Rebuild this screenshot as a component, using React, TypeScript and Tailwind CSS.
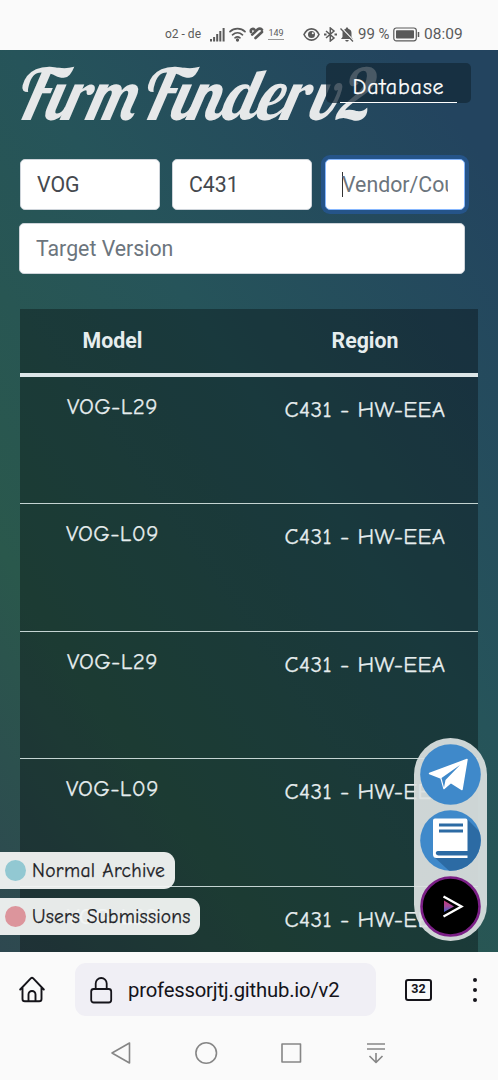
import React from 'react';
import { clsx } from 'clsx';

interface FirmwareRow {
  id: number;
  model: string;
  region: string;
}

const ROWS: FirmwareRow[] = [
  { id: 1, model: 'VOG-L29', region: 'C431 - HW-EEA' },
  { id: 2, model: 'VOG-L09', region: 'C431 - HW-EEA' },
  { id: 3, model: 'VOG-L29', region: 'C431 - HW-EEA' },
  { id: 4, model: 'VOG-L09', region: 'C431 - HW-EEA' },
  { id: 5, model: 'VOG-L29', region: 'C431 - HW-EEA' },
];

const COMIC = "font-['Comic_Neue','Comic_Sans_MS','Open_Sans',sans-serif] [-webkit-text-stroke:0.25px_currentColor]";

const StatusBar: React.FC = () => (
  <header className="flex h-[50px] items-center whitespace-nowrap bg-[#fafafa] pl-[165px] pt-[18px] text-[#5a5a5a]">
    <span className="w-[45px] text-[12px]">o2 - de</span>
    <svg className="h-[15px] w-[15px]" viewBox="0 0 15 15" fill="currentColor">
      <rect x="0" y="12" width="2" height="2.5" />
      <rect x="3.1" y="10" width="2" height="4.5" />
      <rect x="6.2" y="7" width="2" height="7.5" />
      <rect x="9.3" y="4" width="2" height="10.5" />
      <rect x="12.6" y="1" width="2" height="13.5" />
    </svg>
    <svg
      className="ml-1 h-[15px] w-[17px]"
      viewBox="0 0 17 15"
      fill="none"
      stroke="currentColor"
      strokeWidth="1.7"
      strokeLinecap="round"
    >
      <path d="M1 4.6C5 .6 12 .6 16 4.6" />
      <path d="M3.5 7.8c3-2.7 7-2.7 10 0" />
      <path d="M6 10.8c1.5-1.2 3.5-1.2 5 0" />
      <circle cx="8.5" cy="13" r=".8" fill="currentColor" />
    </svg>
    <svg
      className="ml-[3px] h-[14px] w-[15px]"
      viewBox="0 0 15 14"
      fill="none"
      stroke="currentColor"
      strokeWidth="2.6"
      strokeLinecap="round"
    >
      <path d="M2 5C1 2 4 1.2 5.5 2.7" />
      <path d="M3.2 7.6 8.5 2.5C10 1.2 12 1.3 13 2.7" />
      <path d="M6.5 11 13 5" />
    </svg>
    <span className="ml-1 w-[16px] border-b border-[#999] text-center text-[9px] leading-[11px]">149</span>
    <svg
      className="ml-[19px] h-[15px] w-[17px]"
      viewBox="0 0 17 15"
      fill="none"
      stroke="currentColor"
      strokeWidth="1.6"
    >
      <path d="M1 7.5C4.5 0 12.5 0 16 7.5 12.5 15 4.5 15 1 7.5Z" />
      <circle cx="8.5" cy="7.5" r="3.5" fill="currentColor" stroke="none" />
      <circle cx="9.8" cy="6.2" r="1" fill="#fafafa" stroke="none" />
    </svg>
    <svg
      className="ml-1 h-[15px] w-[13px]"
      viewBox="0 0 13 15"
      fill="none"
      stroke="currentColor"
      strokeWidth="1.5"
    >
      <path d="M2 4l8 7-3.7 3V1L10 4l-8 7" />
      <path d="M0 7.5h2.5M10.5 7.5H13" strokeWidth="2" />
    </svg>
    <svg className="ml-[3px] h-[15px] w-[14px]" viewBox="0 0 14 15">
      <path
        d="M7 .5c-.8 0-1.2.5-1.2 1.2C3.5 2.3 2.5 4 2.5 6v4L1 12h12l-1.5-2V6c0-2-1-3.7-3.3-4.3C8.2 1 7.8.5 7 .5ZM5.3 13h3.4c0 2-3.4 2-3.4 0Z"
        fill="currentColor"
      />
      <path d="m1.5 1 12 12.5" stroke="#fafafa" strokeWidth="1.5" />
      <path d="m.5 1.5 12.5 13" stroke="currentColor" strokeWidth="1.3" />
    </svg>
    <span className="ml-1 w-[35px] text-[15px]">99 %</span>
    <svg className="h-[15px] w-[27px]" viewBox="0 0 27 15" fill="none" stroke="currentColor">
      <rect x=".8" y="1" width="22.5" height="12.8" rx="2.5" strokeWidth="1.2" />
      <rect x="3" y="3.2" width="18" height="8.4" rx=".8" fill="currentColor" stroke="none" />
      <path d="M25.5 5v5" strokeWidth="1.5" />
    </svg>
    <span className="ml-1 pt-px text-[15.5px]">08:09</span>
  </header>
);

interface FieldProps {
  value?: string;
  placeholder?: string;
  focused?: boolean;
  className?: string;
}

const Field: React.FC<FieldProps> = ({ value, placeholder, focused = false, className }) => (
  <div
    className={clsx(
      'flex h-[51px] items-center rounded-[5px] border bg-white px-4 text-[21.3px]',
      focused ? 'border-[#86b7fe] ring-4 ring-[#255489]' : 'border-[#ced4da]',
      value ? 'text-[#45494e]' : 'text-[#6c757d]',
      className
    )}
  >
    {focused && <span className="-mr-px h-[25px] w-px shrink-0 bg-[#333]" />}
    <span className="overflow-hidden whitespace-nowrap">{value ?? placeholder}</span>
  </div>
);

const FirmwareTable: React.FC = () => (
  <div className="mx-5 mt-[35px] bg-black/32 text-[#e6edee]">
    <div className="flex h-[68px] items-center border-b-4 border-[#dde6e8] text-[21.3px] font-bold">
      <span className="w-[185px] text-center">Model</span>
      <span className="ml-[47px] w-[226px] text-center">Region</span>
    </div>
    {ROWS.map((row) => (
      <div
        key={row.id}
        className={clsx('flex h-[127.4px] whitespace-nowrap border-b border-[#c4d4d2] text-[23px]', COMIC)}
      >
        <span className="w-[185px] pt-[13px] text-center tracking-[0.45px]">{row.model}</span>
        <span className="ml-[47px] w-[226px] pt-[16px] text-center tracking-[0.35px]">{row.region}</span>
      </div>
    ))}
  </div>
);

const Legend: React.FC = () => (
  <div className={clsx('absolute left-0 top-[802px] flex flex-col items-start gap-[9px] text-[19.5px] text-[#1d2226]', COMIC)}>
    <div className="flex h-[37px] w-[174.5px] items-center gap-[6px] whitespace-nowrap rounded-r-[11px] bg-[#f2f4f3]/95 pl-[5px]">
      <span className="h-[21px] w-[21px] rounded-full bg-[#92c8d2]" />
      <span className="tracking-[0.35px]">Normal Archive</span>
    </div>
    <div className="flex h-[37px] w-[200px] items-center gap-[6px] whitespace-nowrap rounded-r-[11px] bg-[#f2f4f3]/95 pl-[5px]">
      <span className="h-[21px] w-[21px] rounded-full bg-[#dc959c]" />
      <span className="tracking-[0.2px]">Users Submissions</span>
    </div>
  </div>
);

const FloatingLinks: React.FC = () => (
  <div className="absolute left-[414px] top-[688px] flex h-[203px] w-[73px] flex-col items-center gap-[5px] rounded-full bg-[#dce1e1]/93 pt-[6px]">
    <svg className="h-[61px] w-[61px]" viewBox="0 0 61 61">
      <circle cx="30.5" cy="30.5" r="30.3" fill="#3f89ca" />
      <path
        d="M9.5 29.5 47 15.5 42 45.5 31 38.5 24 44.5 21 34Z"
        fill="#fff"
        stroke="#fff"
        strokeWidth="1.5"
        strokeLinejoin="round"
      />
      <path d="M21.5 34 40 21 25.5 36 24 43.5Z" fill="#3f89ca" />
    </svg>
    <svg className="h-[61px] w-[61px]" viewBox="0 0 61 61">
      <defs>
        <clipPath id="book-disc">
          <circle cx="30.5" cy="30.5" r="30.3" />
        </clipPath>
      </defs>
      <g clipPath="url(#book-disc)">
        <path d="M0 0h61v61H0z" fill="#3f89ca" />
        <path d="M47 9 69 31v38H38L13 46Z" fill="#2c6ba4" />
      </g>
      <path
        d="M15 8.5h30.5a2 2 0 0 1 2 2V41H18.5a2.2 2.2 0 0 0 0 4.4h29V48H16.5a3.5 3.5 0 0 1-3.5-3.5v-34a2 2 0 0 1 2-2Z"
        fill="#fff"
      />
      <path d="M17.5 41.3h30v3.5h-30a1.7 1.7 0 0 1 0-3.5Z" fill="#2c6ba4" />
      <path d="M19 13.5h24v3H19zM19 19.5h24v3H19z" fill="#2c6ba4" />
    </svg>
    <svg className="h-[61px] w-[61px]" viewBox="0 0 61 61">
      <defs>
        <linearGradient id="play-fill" x1="0" y1="0" x2="0" y2="1">
          <stop offset="0" stopColor="#c43a78" />
          <stop offset=".5" stopColor="#a34a9a" />
          <stop offset="1" stopColor="#3a5fc8" />
        </linearGradient>
      </defs>
      <circle cx="30.5" cy="30.5" r="29" fill="#000" stroke="#7b1f86" strokeWidth="2.6" />
      <path d="M24 24.5 34 30.5 24 36Z" fill="url(#play-fill)" />
      <path d="M23.5 20.5 41.5 30.5 23.5 40.5" fill="none" stroke="#fff" strokeWidth="2.3" />
    </svg>
  </div>
);

const BrowserBar: React.FC = () => (
  <div className="flex h-[73px] items-center bg-[#fafafa] pt-[2px] text-[#15141a]">
    <svg
      className="ml-[19px] h-[27px] w-[26px]"
      viewBox="0 0 26 27"
      fill="none"
      stroke="currentColor"
      strokeWidth="1.9"
      strokeLinejoin="round"
      strokeLinecap="round"
    >
      <path d="M1.2 13.5 12 2.2q1-.9 2 0L24.8 13.5M3.5 11.5V23q0 2.3 2.3 2.3h14.4q2.3 0 2.3-2.3V11.5" />
      <path d="M9.5 25V18.5a3.5 3.5 0 0 1 7 0V25" />
    </svg>
    <div className="ml-[30px] flex h-[53px] w-[301px] items-center rounded-[11px] bg-[#f0eff5] pl-[15px]">
      <svg
        className="h-[28px] w-[23px]"
        viewBox="0 0 23 28"
        fill="none"
        stroke="currentColor"
        strokeWidth="1.8"
      >
        <rect x="1.2" y="13" width="20" height="13.5" rx="2.5" />
        <path d="M5.7 13V7.5a5.5 5.5 0 0 1 11 0V13" />
      </svg>
      <span className="ml-[15px] whitespace-nowrap pt-px text-[20.3px] tracking-[-0.2px]">professorjtj.github.io/v2</span>
    </div>
    <div className="ml-[29px] flex h-[22px] w-[27px] items-center justify-center rounded-[3px] border-2 border-[#15141a] text-[12.5px] font-bold">
      32
    </div>
    <div className="ml-[41px] flex flex-col gap-[6px]">
      <span className="h-1 w-1 rounded-full bg-[#15141a]" />
      <span className="h-1 w-1 rounded-full bg-[#15141a]" />
      <span className="h-1 w-1 rounded-full bg-[#15141a]" />
    </div>
  </div>
);

const SystemNav: React.FC = () => (
  <nav className="flex h-[55px] items-center gap-[61px] bg-[#fafafa] pl-[109px] text-[#868686]">
    {[
      'M20.5 2v20L3 12Z',
      'M22.5 12a10.3 10.3 0 1 1-20.6 0 10.3 10.3 0 0 1 20.6 0Z',
      'M3 3h18.5v18H3Z',
      'M3 3h18M3 8h18M12 12v9.5M5.5 15 12 21.5l6.5-6.5',
    ].map((d) => (
      <svg
        key={d}
        className="h-6 w-6"
        viewBox="0 0 24 24"
        fill="none"
        stroke="currentColor"
        strokeWidth="1.6"
        strokeLinejoin="round"
      >
        <path d={d} />
      </svg>
    ))}
  </nav>
);

export default function App() {
  return (
    <div className="flex h-[1080px] w-[498px] flex-col overflow-hidden font-['Roboto',sans-serif]">
      <StatusBar />
      <main className="relative h-[902px] overflow-hidden bg-[linear-gradient(55deg,#2e4850_0%,#2a584c_25%,#26545a_57%,#23445f_92%)]">
        <h1 className="ml-[14px] flex h-[109px] origin-left scale-x-93 gap-[7px] whitespace-nowrap pt-[9px] font-['Lobster','Lato',cursive] text-[71px] italic leading-[70px] text-[#e6e8e9]">
          <span>Firm</span>
          <span>Finder</span>
          <span className="-ml-1">v2</span>
        </h1>
        <div
          className={clsx(
            'absolute left-[326px] top-[13px] flex h-[40px] w-[145px] justify-center rounded-[5px] bg-[#142a38]/75 text-[22px] text-white',
            COMIC
          )}
        >
          <span className="h-[40px] w-[117px] border-b border-white pt-[8px] text-center tracking-[0.8px]">Database</span>
        </div>

        {/* Search filters */}
        <div className="flex gap-3 pl-5">
          <Field value="VOG" className="w-[140px]" />
          <Field value="C431" className="w-[140px]" />
          <Field placeholder="Vendor/Country" focused className="ml-px w-[140px]" />
        </div>
        <Field placeholder="Target Version" className="ml-[19px] mt-[13px] w-[446px]" />

        <FirmwareTable />
        <Legend />
        <FloatingLinks />
      </main>
      <BrowserBar />
      <SystemNav />
    </div>
  );
}
